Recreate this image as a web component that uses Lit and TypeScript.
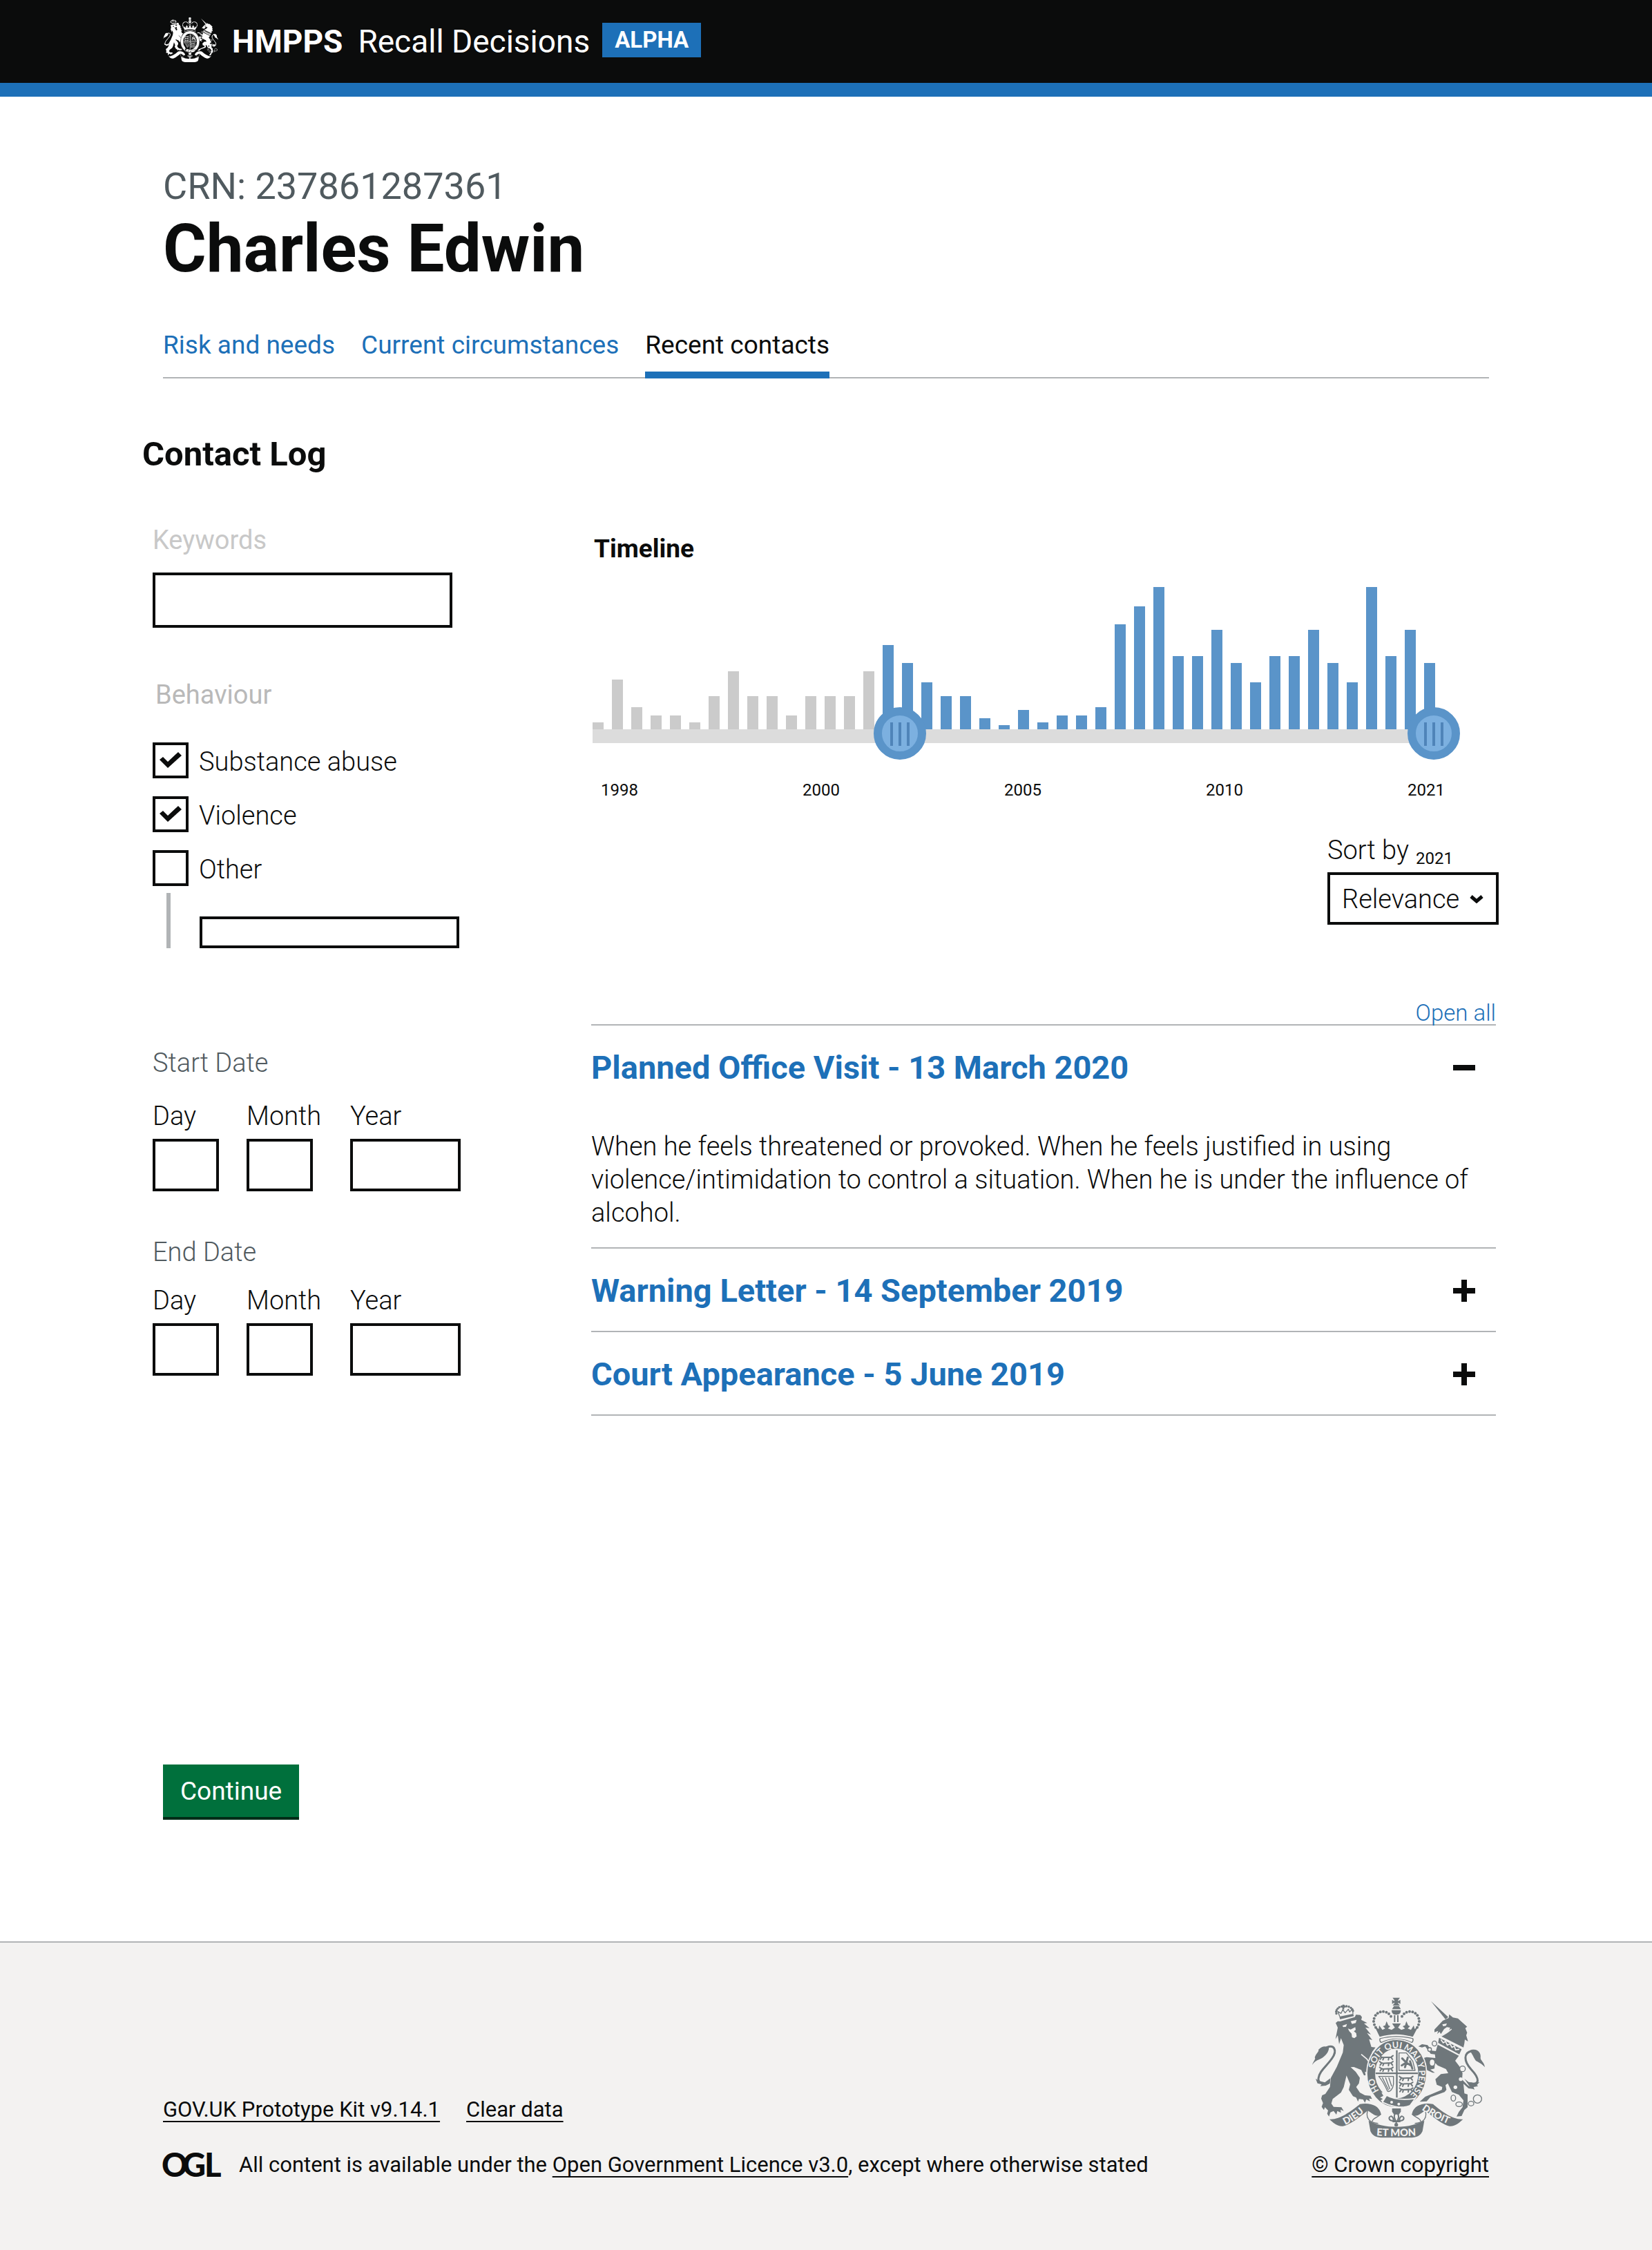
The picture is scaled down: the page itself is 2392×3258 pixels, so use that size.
import { LitElement, html, svg, css, nothing } from 'lit';
import { customElement, property, state } from 'lit/decorators.js';
import { classMap } from 'lit/directives/class-map.js';

/* ---------- Royal coat of arms ---------- */

const dotsOn = (cx: number, cy: number, rx: number, ry: number, from: number, to: number, n: number, r: number) =>
  Array.from({ length: n }, (_, i) => {
    const a = ((from + ((to - from) * i) / (n - 1)) * Math.PI) / 180;
    return svg`<circle cx=${Math.round(cx + rx * Math.cos(a))} cy=${Math.round(cy + ry * Math.sin(a))} r=${r} />`;
  });

const walkingLion = (x: number, y: number) => svg`
  <path transform="translate(${x} ${y})" class="line thick" d="M4 4 L14 8 L50 6 L58 0 M8 8 L2 16 M18 8 L14 18 M40 8 L38 18 M50 8 L56 16 M4 4 L0 0" />`;

@customElement('royal-crest')
export class RoyalCrest extends LitElement {
  @property({ type: Boolean }) motto = false;

  static styles = css`
    :host { display: block; color: #6f777b; --cut: #f3f2f1; }
    svg { display: block; width: 100%; height: auto; fill: currentColor; }
    .cut { fill: var(--cut); }
    .cut-line { fill: none; stroke: var(--cut); stroke-width: 5; }
    .line { fill: none; stroke: currentColor; stroke-width: 4; stroke-linejoin: round; stroke-linecap: round; }
    .thick { stroke-width: 6; }
    .tail { stroke-width: 9; }
    .edged { stroke: var(--cut); stroke-width: 5; }
    text { fill: var(--cut); font: 700 38px Lato, sans-serif; }
    .ribbon { font-size: 42px; font-weight: 900; }
    .ribbon.wide { font-size: 44px; }
  `;

  render() {
    return html`
      <svg viewBox="15 22 750 612" aria-hidden="true">
        <!-- lion -->
        <g>
          <path d="M133 106 L193 94 L196 104 L136 118Z" />
          <path class="line" d="M134 104 L126 84 L140 92 L148 76 L158 90 L172 74 L178 86 L190 72 L192 92" />
          ${dotsOn(156, 86, 37, 26, 165, 350, 12, 5)}
          <path d="M146 54h8v6h6v7h-6v8h-8v-8h-6v-7h6z" />
          <path d="M117 134 L126 126 L136 127 L200 108 L205 98 L224 99 L231 108 L228 120 L254 134 L240 136
            L264 156 L246 154 L270 184 L253 177 L276 208 L262 204 L272 238 L290 240 L276 258 L262 300
            L276 322 L290 345 L288 368 L276 364 L268 374 L256 350 L244 345 L247 360 L240 362 L228 338
            L196 325 L182 326 L204 346 L222 372 L218 396 L206 412 L222 436 L244 448 L268 450 L275 464
            L262 462 L266 474 L250 466 L244 480 L236 466 L218 464 L214 476 L206 458 L192 452 L174 424
            L180 400 L164 362 L152 412 L140 436 L104 464 L98 484 L108 498 L142 500 L152 516 L138 510
            L140 524 L124 516 L120 532 L108 516 L94 522 L88 540 L80 528 L84 514 L70 500 L66 512
            L56 498 L62 482 L54 462 L58 448 L72 442 L92 412 L96 372 L122 324 L148 262 L152 230
            L140 200 L132 226 L126 188 L116 204 L126 154Z" />
          <path class="cut" d="M146 146 L166 138 L162 150 L150 152Z M182 126 L208 120 L204 134 L188 138Z" />
          <path class="cut" d="M170 158 L182 162 L202 152 L204 164 L196 170 L206 178 L208 192 L198 200 L188 196 L186 180 L176 170Z" />
          <path class="cut-line" d="M228 270 L252 290 L272 318" />
          <path class="line tail" d="M78 240 C112 226 124 254 102 286 C78 322 46 342 42 374 C40 396 62 402 84 396" />
          <path d="M15 316 C20 300 32 290 26 284 C34 262 46 258 42 250 C56 234 74 232 88 242 C86 268 62 286 46 292 C34 296 22 304 15 316Z" />
          <path d="M30 376 L46 386 L70 392 L94 374 L92 396 L74 406 L50 408 L56 400 L38 396Z" />
        </g>
        <!-- unicorn -->
        <g>
          <path d="M531 39 L606 108 L594 118Z" />
          <path d="M546 162 L582 124 L608 112 L610 96 L626 110 L648 114 L668 132 L688 150 L680 156 L688 176 L684 188
            L692 214 L678 206 L676 222 L672 240 L572 190 L608 172 L614 154 L600 152 L588 160 L574 182 L568 172 L558 182 L562 168 L546 174Z" />
          <path class="cut" d="M580 140 L600 136 L596 146 L584 148Z" />
          <path class="cut-line" d="M572 192 C596 180 604 176 620 160" />
          <path d="M566 198 L664 248 L654 270 L562 220Z" />
          <path class="cut-line" d="M574 206 L584 220 L594 214 L602 230 L614 224 L622 240 L632 234 L638 250 L654 248" />
          <path d="M560 228 L652 276 L636 298 L656 324 L668 352 L666 380 L690 404 L714 420 L694 418 L672 398
            L676 440 L690 444 L690 500 L676 512 L664 538 L642 540 L652 520 L668 500 L672 470 L652 446 L622 434
            L604 396 L594 404 L598 424 L590 434 L528 456 L512 474 L482 476 L506 454 L530 444 L578 424 L580 412
            L556 402 L550 378 L574 356 L606 352 L596 334 L560 318 L548 306 L546 332 L528 336 L548 350 L538 350
            L512 338 L488 308 L486 290 L512 282 L550 286 L548 270 L530 268 L506 236 L492 240 L476 236 L492 226
            L516 230 L534 254 L552 256Z" />
          <path class="line tail" d="M708 256 C672 262 672 300 706 336 C744 376 742 404 704 396" />
          <path d="M698 254 C730 240 750 262 746 286 C746 296 762 304 765 326 C752 310 736 304 726 298 C716 286 712 268 698 254Z" />
          <path d="M676 376 L694 390 L722 396 L742 390 L730 404 L736 408 L716 412 L720 424 L702 414Z" />
          <g class="line">
            <ellipse cx="546" cy="223" rx="10" ry="11" class="cut" stroke="currentColor" />
            <circle cx="525" cy="249" r="8" class="cut" stroke="currentColor" />
            <ellipse cx="536" cy="306" rx="12" ry="15" class="cut" stroke="currentColor" />
            <circle cx="668" cy="333" r="12" class="cut" stroke="currentColor" />
            <ellipse cx="628" cy="460" rx="10" ry="13" />
            <ellipse cx="653" cy="487" rx="14" ry="10" />
            <ellipse cx="705" cy="484" rx="12" ry="10" />
            <circle cx="733" cy="464" r="18" />
          </g>
          <circle class="cut" cx="660" cy="378" r="8" />
          <circle class="cut" cx="637" cy="413" r="8" />
        </g>
        <!-- garter and shield -->
        <g>
          <ellipse class="edged" cx="382" cy="353" rx="130" ry="149" />
          <ellipse class="cut" cx="382" cy="353" rx="94" ry="108" />
          <path d="M379 252h7v206h-7z M290 349h184v7h-184z" />
          ${walkingLion(308, 276)} ${walkingLion(308, 301)} ${walkingLion(308, 326)}
          ${walkingLion(394, 366)} ${walkingLion(394, 391)} ${walkingLion(394, 416)}
          <path class="line" d="M392 264 H424 L452 300 L462 340 H392Z" />
          <path class="line tail" d="M406 288 L424 306 L418 326 M424 306 L446 320 M430 284 L424 306 L404 318 M440 300 L450 332" />
          <path class="line" d="M304 366 H368 V400 C366 420 352 436 342 430 C334 412 320 384 304 366Z M320 372 L346 424 M334 372 L352 420 M348 372 L360 408" />
          <path class="cut" d="M316 436 C330 430 346 444 342 462 C338 476 318 480 312 470 L322 464 L310 458 L324 450Z" />
          <path class="edged" d="M338 448 C376 470 420 468 462 462 L440 492 C404 508 356 496 320 478Z" />
          <circle class="cut" cx="360" cy="478" r="6" />
          <circle class="cut" cx="391" cy="486" r="6" />
          <path d="M362 505h38v14l-8 12h-22l-8-12z" />
          <path class="line thick" d="M380 520 C366 536 372 548 378 560 H384 C390 548 396 536 380 520Z M374 556 C362 562 346 556 350 544 C358 532 368 544 368 556
            M388 556 C400 562 416 556 412 544 C404 532 394 544 394 556 M366 562 H396 M380 562 V578" />
          <circle cx="380" cy="576" r="8" />
        </g>
        <!-- crown -->
        <g>
          <path d="M364 24h32l-8 11v4l10-6v18l-10-6v4l8 9h-32l8-9v-4l-10 6v-18l10 6v-4z" />
          <path d="M370 60h22l8 14h-38z M360 78h40c0 14-8 20-20 20s-20-6-20-20z" />
          <path d="M370 100h6v30h-6z M384 100h6v30h-6z" />
          ${dotsOn(322, 126, 40, 42, 140, 330, 11, 6)}
          ${dotsOn(440, 126, 40, 42, 210, 400, 11, 6)}
          <path d="M286 148 L304 160 L306 144 L320 164 L332 158 L322 148 L332 144 L338 126 L346 144 L354 148 L344 158 L360 164
            L374 154 L362 136 H400 L388 154 L402 164 L418 158 L408 148 L418 144 L424 126 L432 144 L440 148 L430 158 L444 164
            L456 144 L460 160 L476 148 L452 194 C404 180 356 180 308 194Z" />
          <path class="edged" d="M306 198 C352 186 408 186 456 198 C460 210 456 220 448 224 C404 200 358 200 314 224 C304 218 302 208 306 198Z" />
          <path class="cut" d="M312 203 C356 192 406 192 450 203 C452 210 450 214 446 216 C404 196 358 196 316 216 C310 212 310 208 312 203Z" />
        </g>
        <!-- ribbon -->
        <g>
          <path d="M90 552 C134 556 188 514 222 486 C254 480 298 484 312 522 L314 532 C296 548 272 524 256 514 C230 536 182 576 148 582 C124 584 106 566 90 552Z" />
          <path d="M670 552 C626 556 572 514 540 486 C508 480 464 484 450 522 L448 532 C466 548 490 524 506 514 C532 536 580 576 612 582 C636 584 654 566 670 552Z" />
          <path class="line" d="M256 514 C246 546 262 566 300 570 M506 514 C516 546 500 566 462 570 M312 530 C300 546 280 544 276 560 M450 530 C462 546 482 544 486 560" />
          <path d="M260 558 C330 594 432 594 502 558 L494 604 C486 622 472 632 436 632 H326 C290 632 276 622 268 604Z" />
        </g>
        ${this.motto
          ? svg`
          <defs>
            <path id="garter" d="M306 428 A98 113 0 1 1 440 446" />
            <path id="dieu" d="M158 577 Q214 550 258 504" />
            <path id="droit" d="M490 510 Q546 550 624 580" />
            <path id="mon" d="M280 622 Q382 630 484 622" />
          </defs>
          <text><textPath href="#garter" startOffset="0">HO</textPath></text>
          <text><textPath href="#garter" startOffset="100">SOIT</textPath></text>
          <text><textPath href="#garter" startOffset="194">QUI</textPath></text>
          <text><textPath href="#garter" startOffset="272">MAL Y</textPath></text>
          <text><textPath href="#garter" startOffset="392">PENSE</textPath></text>
          <text class="ribbon"><textPath href="#dieu">DIEU</textPath></text>
          <text class="ribbon"><textPath href="#droit">DROIT</textPath></text>
          <text class="ribbon wide"><textPath href="#mon" startOffset="14">ET MON</textPath></text>`
          : nothing}
      </svg>
    `;
  }
}

/* ---------- Timeline histogram with a two-ended range ---------- */

@customElement('contact-timeline')
export class ContactTimeline extends LitElement {
  @state() private from = 15.7;
  @state() private to = 43;

  private readonly counts = [
    10, 72, 32, 20, 20, 10, 48, 84, 48, 48, 20, 48, 48, 48, 84, 122, 96, 68, 48, 48, 16, 6,
    28, 10, 20, 20, 32, 152, 178, 206, 106, 106, 144, 96, 68, 106, 106, 144, 96, 68, 206, 106, 144, 96,
  ];
  private readonly years = ['1998', '2000', '2005', '2010', '2021'];

  static styles = css`
    :host { display: block; max-width: 1220px; font-family: Roboto, 'Liberation Sans', sans-serif; color: #0b0c0c; }
    h3 { margin: 0 0 31px 2px; font-size: 37px; line-height: 48px; font-weight: 700; }
    .chart { position: relative; }
    .bars { display: flex; justify-content: space-between; align-items: flex-end; height: 206px; }
    .bar { width: 16px; background: #cbcbcb; }
    .bar.on { background: #5a94c9; }
    .track { height: 20px; background: #dcdcdc; }
    .range {
      position: absolute; left: -38px; bottom: -24px; width: calc(100% + 74px); height: 76px;
      margin: 0; appearance: none; background: none; pointer-events: none;
    }
    .range::-webkit-slider-runnable-track { height: 76px; background: none; }
    .range::-webkit-slider-thumb {
      appearance: none; box-sizing: border-box; width: 76px; height: 76px; pointer-events: auto; cursor: ew-resize;
      border: 12px solid #5a94c9; border-radius: 50%;
      background:
        linear-gradient(#4f84b9, #4f84b9) 12px 10px / 4px 34px no-repeat,
        linear-gradient(#4f84b9, #4f84b9) 24px 10px / 4px 34px no-repeat,
        linear-gradient(#4f84b9, #4f84b9) 36px 10px / 4px 34px no-repeat,
        #7cb0e0;
    }
    .years { display: flex; justify-content: space-between; margin: 54px -14px 0 12px; font-size: 24px; line-height: 28px; font-weight: 400; }
  `;

  render() {
    return html`
      <h3>Timeline</h3>
      <div class="chart">
        <div class="bars">
          ${this.counts.map(
            (n, i) => html`<div
              class=${classMap({ bar: true, on: i >= Math.floor(this.from) && i <= Math.ceil(this.to) })}
              style="height:${n}px"
            ></div>`,
          )}
        </div>
        <div class="track"></div>
        <input class="range" type="range" min="0" max="43" step="0.1" aria-label="From" .value=${String(this.from)}
          @input=${(e: Event) => (this.from = Number((e.target as HTMLInputElement).value))} />
        <input class="range" type="range" min="0" max="43" step="0.1" aria-label="To" .value=${String(this.to)}
          @input=${(e: Event) => (this.to = Number((e.target as HTMLInputElement).value))} />
      </div>
      <div class="years">${this.years.map((y) => html`<span>${y}</span>`)}</div>
    `;
  }
}

/* ---------- Page ---------- */

interface Entry {
  title: string;
  body: string;
}

@customElement('app-root')
export class AppRoot extends LitElement {
  @state() private open = new Set<number>([0]);

  private readonly entries: Entry[] = [
    {
      title: 'Planned Office Visit - 13 March 2020',
      body: 'When he feels threatened or provoked. When he feels justified in using violence/intimidation to control a situation. When he is under the influence of alcohol.',
    },
    { title: 'Warning Letter - 14 September 2019', body: '' },
    { title: 'Court Appearance - 5 June 2019', body: '' },
  ];

  private readonly behaviours = [
    { id: 'substance', label: 'Substance abuse', checked: true },
    { id: 'violence', label: 'Violence', checked: true },
    { id: 'other', label: 'Other', checked: false },
  ];

  static styles = css`
    :host {
      display: flex; flex-direction: column; min-height: 100vh; background: #fff; color: #0b0c0c;
      font-family: Roboto, 'Liberation Sans', sans-serif; font-size: 37px; line-height: 48px;
    }
    * { box-sizing: border-box; }
    h1, h2, h3, p { margin: 0; }
    .wrap { width: 100%; max-width: 1920px; margin: 0 auto; }

    header { background: #0b0c0c; color: #fff; border-bottom: 20px solid #1d70b8; }
    .brand { display: flex; align-items: center; height: 120px; padding-bottom: 5px; }
    .brand royal-crest { width: 80px; color: #fff; --cut: #0b0c0c; }
    .org { margin-left: 20px; padding-top: 4px; font-size: 46px; font-weight: 700; color: #fff; text-decoration: none; }
    .service { margin-left: 22px; padding-top: 4px; font-size: 46px; color: #fff; text-decoration: none; }
    .tag { margin-left: 18px; padding: 0 18px; background: #1d70b8; font-size: 33px; line-height: 50px; font-weight: 700; }

    .crn { padding-top: 100px; font-size: 54px; line-height: 60px; color: #505a5f; }
    h1 { font-size: 96px; line-height: 120px; font-weight: 700; }
    .tabs { display: flex; gap: 38px; margin-top: 55px; box-shadow: inset 0 -2px #b1b4b6; }
    .tabs a { padding-bottom: 13px; border-bottom: 10px solid transparent; line-height: 50px; color: #1d70b8; text-decoration: none; }
    .tabs a.current { color: #0b0c0c; border-bottom-color: #1d70b8; }

    .log { margin: 80px -14px 0 -30px; }
    h2 { font-size: 49px; line-height: 60px; font-weight: 700; }
    .columns { display: grid; grid-template-columns: 446px minmax(0, 1fr); gap: 189px; padding-left: 15px; font-weight: 300; font-size: 38px; }

    .filters { padding-top: 70px; }
    fieldset { margin: 0; padding: 0; border: 0; min-width: 0; }
    legend { padding: 0; }
    label, legend { display: block; }
    .faint { color: #b9b9b9; font-weight: 400; }
    .fainter { color: #c8c8c8; font-weight: 400; }
    .muted { color: #505a5f; }
    input[type='text'] {
      display: block; margin: 0; padding: 0 8px; border: 4px solid #0b0c0c; border-radius: 0; background: #fff; font: inherit; color: inherit;
    }
    input.keywords[type='text'] { width: 434px; height: 80px; margin-top: 23px; }
    .behaviour { margin-top: 73px; }
    .behaviour legend { padding-left: 4px; margin-bottom: 45px; }
    .checks { display: grid; gap: 26px; }
    .check { display: flex; align-items: center; gap: 15px; }
    .check label { padding-top: 4px; }
    .check input {
      appearance: none; flex: none; width: 52px; height: 52px; margin: 0; border: 4px solid #0b0c0c; background: #fff;
    }
    .check input:checked::before {
      content: ''; display: block; width: 44px; height: 44px; background: #0b0c0c;
      clip-path: polygon(6px 21px, 11px 17px, 18px 24px, 33px 10px, 38px 15px, 18px 33px);
    }
    .conditional { display: flex; align-items: flex-end; height: 80px; margin: 10px 0 0 20px; padding-left: 42px; border-left: 6px solid #b1b4b6; }
    .conditional input { width: 376px; height: 46px; }
    .start { margin-top: 142px; }
    .start legend { margin-bottom: 29px; }
    .end { margin-top: 64px; }
    .end legend { margin-bottom: 22px; }
    .date { display: grid; grid-template-columns: 96px 110px 160px; gap: 40px; }
    .date input[type='text'] { height: 76px; margin-top: 9px; }
    .short { width: 96px; }
    .long { width: 160px; }

    .results { padding-top: 83px; }
    contact-timeline { margin-left: 2px; }
    .sort { display: grid; justify-content: end; margin-top: 49px; }
    .sort-head { display: flex; align-items: flex-end; gap: 10px; }
    .year { font-size: 24px; line-height: 24px; font-weight: 400; }
    .select { position: relative; width: 248px; margin-top: 8px; }
    select {
      appearance: none; display: block; width: 100%; height: 76px; margin: 0; padding: 2px 0 0 17px; border: 4px solid #0b0c0c; border-radius: 0;
      background: #fff; color: inherit; font: inherit;
    }
    .select svg { position: absolute; right: 22px; top: 33px; width: 20px; height: 12px; pointer-events: none; fill: none; stroke: #0b0c0c; stroke-width: 5; }

    .accordion { margin: 112px 4px 0 0; border-bottom: 2px solid #b1b4b6; }
    .controls { display: flex; justify-content: flex-end; }
    button { font-family: inherit; cursor: pointer; }
    .open-all { padding: 0; border: 0; background: none; color: #1d70b8; font-size: 33px; line-height: 32px; font-weight: 300; }
    .entry { border-top: 2px solid #b1b4b6; }
    .toggle {
      display: flex; align-items: center; justify-content: space-between; width: 100%; padding: 31px 30px 28px 0; border: 0; background: none;
      color: #1d70b8; font-size: 47px; line-height: 60px; font-weight: 700; text-align: left;
    }
    .toggle svg { flex: none; width: 32px; height: 32px; fill: #0b0c0c; }
    .entry p { padding: 32px 0 26px; }

    .continue {
      display: block; margin-top: 505px; padding: 15px 25px 13px; border: 0; border-bottom: 4px solid #002d18; background: #00703c; color: #fff;
      font-size: 37px; line-height: 48px;
    }

    footer { flex: 1; margin-top: 176px; border-top: 2px solid #b1b4b6; background: #f3f2f1; font-size: 31px; line-height: 40px; }
    .foot { display: flex; justify-content: space-between; align-items: flex-end; padding: 79px 0 103px; }
    footer a { color: inherit; text-decoration: underline; text-decoration-thickness: 2px; text-underline-offset: 6px; text-decoration-skip-ink: none; }
    .meta { display: flex; gap: 38px; margin-bottom: 40px; }
    .licence { display: flex; align-items: center; gap: 28px; }
    .ogl { flex: none; width: 82px; height: 34px; overflow: visible; }
    .ogl text { font: 900 47px Lato, sans-serif; fill: #0b0c0c; }
    .copy { display: grid; justify-items: end; gap: 19px; }
    .copy royal-crest { width: 250px; margin-right: 6px; }
  `;

  private toggle(i: number) {
    const next = new Set(this.open);
    next.has(i) ? next.delete(i) : next.add(i);
    this.open = next;
  }

  private dateFields(id: string, title: string) {
    return html`
      <fieldset class=${id}>
        <legend class="muted">${title}</legend>
        <div class="date">
          ${['Day', 'Month', 'Year'].map(
            (part) => html`<div>
              <label for="${id}-${part}">${part}</label>
              <input type="text" inputmode="numeric" id="${id}-${part}" class=${part === 'Year' ? 'long' : 'short'} />
            </div>`,
          )}
        </div>
      </fieldset>
    `;
  }

  render() {
    return html`
      <header>
        <div class="wrap brand">
          <royal-crest></royal-crest>
          <a class="org" href="#">HMPPS</a>
          <a class="service" href="#">Recall Decisions</a>
          <strong class="tag">ALPHA</strong>
        </div>
      </header>

      <main class="wrap">
        <p class="crn">CRN: 237861287361</p>
        <h1>Charles Edwin</h1>
        <nav class="tabs">
          <a href="#risk">Risk and needs</a>
          <a href="#circumstances">Current circumstances</a>
          <a class="current" href="#contacts" aria-current="page">Recent contacts</a>
        </nav>

        <section class="log">
          <h2>Contact Log</h2>
          <div class="columns">
            <form class="filters">
              <label class="fainter" for="keywords">Keywords</label>
              <input class="keywords" type="text" id="keywords" />

              <fieldset class="behaviour">
                <legend class="faint">Behaviour</legend>
                <div class="checks">
                  ${this.behaviours.map(
                    (b) => html`<div class="check">
                      <input type="checkbox" id=${b.id} ?checked=${b.checked} />
                      <label for=${b.id}>${b.label}</label>
                    </div>`,
                  )}
                </div>
                <div class="conditional"><input type="text" aria-label="Other behaviour" /></div>
              </fieldset>

              ${this.dateFields('start', 'Start Date')} ${this.dateFields('end', 'End Date')}
            </form>

            <div class="results">
              <contact-timeline></contact-timeline>

              <div class="sort">
                <div class="sort-head">
                  <label for="sort">Sort by</label>
                  <span class="year">2021</span>
                </div>
                <div class="select">
                  <select id="sort">
                    <option>Relevance</option>
                  </select>
                  <svg viewBox="0 0 20 12" aria-hidden="true"><path d="M2 2 L10 9 L18 2" /></svg>
                </div>
              </div>

              <div class="accordion">
                <div class="controls">
                  <button class="open-all" type="button" @click=${() => (this.open = new Set(this.entries.keys()))}>Open all</button>
                </div>
                ${this.entries.map(
                  (entry, i) => html`<div class="entry">
                    <h3>
                      <button class="toggle" type="button" aria-expanded=${this.open.has(i)} @click=${() => this.toggle(i)}>
                        ${entry.title}
                        <svg viewBox="0 0 32 32" aria-hidden="true">
                          <path d="M0 12h32v8H0z" />
                          ${this.open.has(i) ? nothing : svg`<path d="M12 0h8v32h-8z" />`}
                        </svg>
                      </button>
                    </h3>
                    ${this.open.has(i) && entry.body ? html`<p>${entry.body}</p>` : nothing}
                  </div>`,
                )}
              </div>
            </div>
          </div>
        </section>

        <button class="continue" type="button">Continue</button>
      </main>

      <footer>
        <div class="wrap foot">
          <div>
            <div class="meta"><a href="#kit">GOV.UK Prototype Kit v9.14.1</a><a href="#clear">Clear data</a></div>
            <div class="licence">
              <svg class="ogl" viewBox="0 0 82 34"><text x="-2 28 60" y="34">OGL</text></svg>
              <span>All content is available under the <a href="#ogl">Open Government Licence v3.0</a>, except where otherwise stated</span>
            </div>
          </div>
          <div class="copy">
            <royal-crest motto></royal-crest>
            <a href="#copyright">© Crown copyright</a>
          </div>
        </div>
      </footer>
    `;
  }
}
